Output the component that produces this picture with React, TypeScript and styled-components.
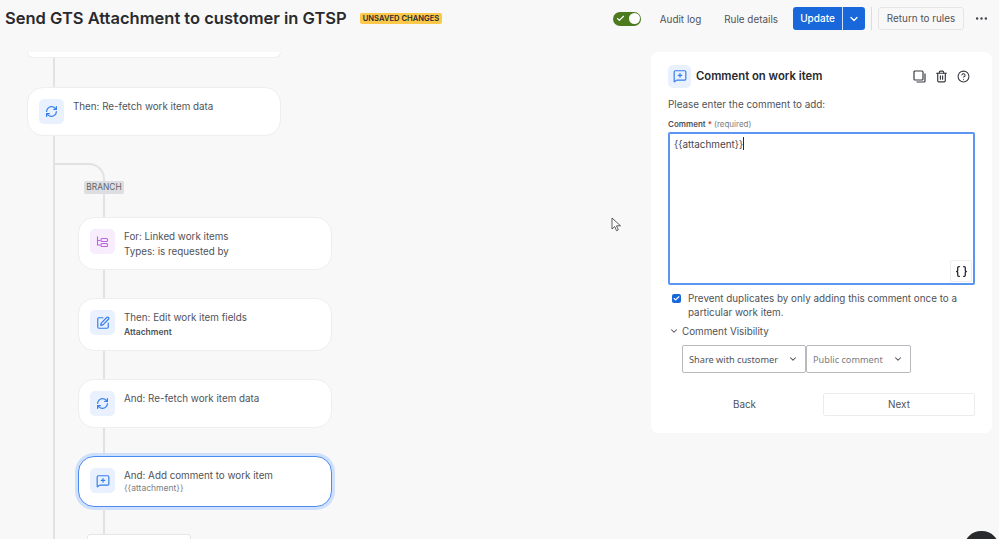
import React from 'react'
import styled, { createGlobalStyle } from 'styled-components'
import {
  Check,
  ChevronDown,
  CircleHelp,
  Ellipsis,
  MessageSquarePlus,
  RefreshCw,
  SquarePen,
  Trash2,
  Braces
} from 'lucide-react'

const GlobalStyle = createGlobalStyle`
  html, body {
    margin: 0;
    padding: 0;
    background: #f8f8f8;
    overflow: hidden;
  }
  * { box-sizing: border-box; }
`

const Page = styled.div`
  position: relative;
  width: 999px;
  height: 539px;
  overflow: hidden;
  background: #f8f8f8;
  color: #292a2e;
  font-family: Inter, 'Liberation Sans', sans-serif;
`

// top bar
const TopBar = styled.header`
  display: flex;
  align-items: center;
  height: 37px;
  padding: 0 0 0 5px;
`

const Title = styled.h1`
  margin: 0;
  font-size: 16.5px;
  line-height: 37px;
  font-weight: 600;
  white-space: nowrap;
`

const Lozenge = styled.span`
  margin-left: 13px;
  padding: 0 3px;
  height: 11px;
  line-height: 11px;
  border-radius: 2px;
  background: #fbc84a;
  font-size: 7.6px;
  font-weight: 600;
  white-space: nowrap;
`

const TopActions = styled.div`
  display: flex;
  align-items: center;
  margin-left: auto;
  height: 37px;
`

const Toggle = styled.div`
  position: relative;
  display: flex;
  align-items: center;
  width: 28px;
  height: 14px;
  margin-right: 19px;
  padding-left: 3px;
  border-radius: 7px;
  background: #4c7a1f;
  color: #fff;
  &::after {
    content: '';
    position: absolute;
    right: 1px;
    top: 1.5px;
    width: 11px;
    height: 11px;
    border-radius: 50%;
    background: #fff;
  }
`

const TextAction = styled.span`
  font-size: 9.9px;
  color: #505258;
  margin-right: 15px;
  white-space: nowrap;
  & + & {
    margin-left: 8px;
  }
`

const SplitButton = styled.div`
  display: flex;
  height: 23px;
  border-radius: 3px;
  overflow: hidden;
  background: #1868db;
  color: #fff;
`

const UpdateLabel = styled.span`
  width: 50px;
  line-height: 23px;
  text-align: center;
  font-size: 10px;
  font-weight: 500;
  border-right: 1px solid #cfe1fd;
`

const SplitChevron = styled.span`
  display: flex;
  align-items: center;
  justify-content: center;
  width: 22px;
`

const Divider = styled.span`
  width: 1px;
  height: 23px;
  margin: 0 6px;
  background: #dcdcdc;
`

const ReturnButton = styled.span`
  width: 86px;
  height: 23px;
  line-height: 21px;
  text-align: center;
  font-size: 9.9px;
  color: #505258;
  border: 1px solid #e6e6e6;
  border-radius: 3px;
  white-space: nowrap;
`

const MoreButton = styled.span`
  display: flex;
  justify-content: center;
  width: 35px;
  color: #44464c;
`

// body
const Body = styled.div`
  display: flex;
  align-items: flex-start;
  padding-top: 15px;
`

const Flow = styled.div`
  width: 651px;
  padding-left: 27px;
`

const CutOffCard = styled.div`
  width: 254px;
  height: 6px;
  background: #fff;
  border: 1px solid #eeeeee;
  border-top: 0;
  border-radius: 0 0 16px 16px;
`

const Connector = styled.div<{ $h: number; $x: number }>`
  width: 2px;
  height: ${(p) => p.$h}px;
  margin-left: ${(p) => p.$x}px;
  background: #e2e2e2;
`

const Card = styled.div<{ $h: number; $selected?: boolean }>`
  display: flex;
  gap: 9px;
  width: 254px;
  height: ${(p) => p.$h}px;
  padding: 11px;
  background: #fff;
  border-radius: 16px;
  border: ${(p) => (p.$selected ? '1.5px solid #4c8cf0' : '1px solid #eeeeee')};
  box-shadow: ${(p) => (p.$selected ? '0 0 0 3px #cfe0fc' : 'none')};
`

const IconTile = styled.span<{ $purple?: boolean }>`
  display: flex;
  flex: none;
  align-items: center;
  justify-content: center;
  width: 25px;
  height: 25px;
  border-radius: 5px;
  background: ${(p) => (p.$purple ? '#f7edfd' : '#e9f1ff')};
  color: ${(p) => (p.$purple ? '#bf63e0' : '#357de8')};
`

const CardText = styled.div`
  font-size: 9.8px;
  line-height: 15px;
  color: #505258;
  white-space: nowrap;
`

const CardSub = styled.div<{ $bold?: boolean }>`
  font-size: 8.5px;
  line-height: 11px;
  font-weight: ${(p) => (p.$bold ? 600 : 400)};
  margin-top: ${(p) => (p.$bold ? '2px' : '0')};
  color: ${(p) => (p.$bold ? '#505258' : '#7b7d83')};
`

const Trunk = styled.div`
  width: 330px;
  margin-left: 26px;
  padding: 27px 0 0 0;
  border-left: 2px solid #e2e2e2;
  height: 410px;
`

const BranchCurve = styled.div`
  width: 50px;
  height: 18px;
  border-top: 2px solid #e2e2e2;
  border-right: 2px solid #e2e2e2;
  border-top-right-radius: 16px;
`

const BranchBadge = styled.span`
  display: block;
  width: 40px;
  height: 13px;
  margin-left: 29px;
  line-height: 13px;
  text-align: center;
  font-size: 8.4px;
  color: #62646a;
  background: #dddee1;
  border-radius: 2px;
`

const BranchCards = styled.div`
  padding-left: 23px;
`

const AddStep = styled.div`
  width: 104px;
  height: 20px;
  margin-left: 9px;
  background: #fff;
  border: 1px solid #e6e6e6;
  border-radius: 3px;
`

// right panel
const Panel = styled.aside`
  width: 341px;
  height: 381px;
  padding: 13px 17px;
  background: #fff;
  border-radius: 8px;
`

const PanelHead = styled.div`
  display: flex;
  align-items: center;
  height: 22px;
`

const PanelTile = styled(IconTile)`
  width: 23px;
  height: 23px;
`

const PanelTitle = styled.h2`
  margin: 0 0 0 5px;
  font-size: 11.3px;
  font-weight: 600;
  white-space: nowrap;
`

const PanelTools = styled.div`
  display: flex;
  gap: 9px;
  margin-left: auto;
  margin-right: 5px;
  color: #3a3c42;
`

const Prompt = styled.p`
  margin: 9px 0 0;
  font-size: 9.9px;
  line-height: 16px;
  color: #505258;
`

const FieldLabel = styled.div`
  margin-top: 6px;
  font-size: 8px;
  line-height: 12px;
  font-weight: 600;
  color: #505258;
  & > em {
    font-style: normal;
    color: #c9372c;
  }
  & > span {
    font-weight: 400;
    color: #7b7d83;
  }
`

const TextBox = styled.div`
  position: relative;
  width: 307px;
  height: 153px;
  margin-top: 2px;
  padding: 2px 4px;
  border: 2px solid #5a96f2;
  border-radius: 2px;
  font-size: 9.9px;
  line-height: 16px;
  color: #44464c;
`

const Caret = styled.span`
  display: inline-block;
  width: 1px;
  height: 13px;
  vertical-align: -2px;
  background: #292a2e;
`

const VarButton = styled.span`
  position: absolute;
  right: 1px;
  bottom: 1px;
  display: flex;
  align-items: center;
  justify-content: center;
  width: 22px;
  height: 22px;
  border: 1px solid #eeeeee;
  border-radius: 2px;
  background: #fff;
  color: #292a2e;
`

const CheckRow = styled.div`
  display: flex;
  gap: 7px;
  width: 300px;
  margin-top: 6px;
  padding-left: 4px;
`

const CheckBox = styled.span`
  display: flex;
  flex: none;
  align-items: center;
  justify-content: center;
  width: 9px;
  height: 9px;
  margin-top: 3px;
  border-radius: 2px;
  background: #1868db;
  color: #fff;
`

const CheckText = styled.span`
  font-size: 9.85px;
  line-height: 14px;
  color: #505258;
`

const Disclosure = styled.div`
  display: flex;
  align-items: center;
  gap: 3px;
  margin-top: 5px;
  font-size: 9.85px;
  line-height: 14px;
  color: #505258;
  & > svg {
    margin-left: 1px;
  }
`

const SelectRow = styled.div`
  display: flex;
  margin: 7px 0 0 14px;
`

const SelectBox = styled.div<{ $w: number; $muted?: boolean }>`
  display: flex;
  align-items: center;
  justify-content: space-between;
  width: ${(p) => p.$w}px;
  height: 28px;
  padding: 0 7px 0 6px;
  border: 1px solid #b9b9bd;
  border-radius: 2px;
  font-family: 'Noto Sans', 'Open Sans', sans-serif;
  font-size: 9.2px;
  color: ${(p) => (p.$muted ? '#7b7d83' : '#505258')};
  white-space: nowrap;
  & > svg {
    color: #44464c;
  }
`

const PanelFooter = styled.div`
  display: flex;
  align-items: center;
  margin-top: 20px;
`

const BackButton = styled.span`
  width: 153px;
  line-height: 21px;
  text-align: center;
  font-size: 9.9px;
  color: #505258;
`

const NextButton = styled.span`
  margin-left: 2px;
  width: 152px;
  height: 23px;
  line-height: 21px;
  text-align: center;
  font-size: 9.9px;
  color: #505258;
  border: 1px solid #ececec;
  border-radius: 2px;
`

const MouseCursor = styled.svg`
  position: absolute;
  left: 611px;
  top: 217px;
`

const HelpBlob = styled.div`
  position: absolute;
  left: 964px;
  top: 531px;
  width: 35px;
  height: 40px;
  border-radius: 17px;
  background: #292a2e;
`

const LinkedIcon = () => (
  <svg width="13" height="13" viewBox="0 0 13 13" fill="none" stroke="currentColor" strokeWidth="1.1">
    <path d="M1.5 1.5v8.5h3M1.5 5.5h3" />
    <rect x="5" y="3.5" width="6.5" height="3" rx="1" />
    <rect x="5" y="8.5" width="6.5" height="3" rx="1" />
  </svg>
)

const DuplicateIcon = () => (
  <svg width="13" height="13" viewBox="0 0 13 13" fill="none" stroke="currentColor" strokeWidth="1.2">
    <rect x="1" y="1" width="9" height="9" rx="1" />
    <path d="M12 3.5v7.5a1 1 0 0 1-1 1H3.5" />
  </svg>
)

const App: React.FC = () => (
  <Page>
    <GlobalStyle />
    <TopBar>
      <Title>Send GTS Attachment to customer in GTSP</Title>
      <Lozenge>UNSAVED CHANGES</Lozenge>
      <TopActions>
        <Toggle>
          <Check size={9} strokeWidth={3} />
        </Toggle>
        <TextAction>Audit log</TextAction>
        <TextAction>Rule details</TextAction>
        <SplitButton>
          <UpdateLabel>Update</UpdateLabel>
          <SplitChevron>
            <ChevronDown size={12} strokeWidth={2.5} />
          </SplitChevron>
        </SplitButton>
        <Divider />
        <ReturnButton>Return to rules</ReturnButton>
        <MoreButton>
          <Ellipsis size={15} />
        </MoreButton>
      </TopActions>
    </TopBar>

    <Body>
      <Flow>
        <CutOffCard />
        <Connector $h={29} $x={26} />
        <Card $h={49}>
          <IconTile>
            <RefreshCw size={13} strokeWidth={2.2} />
          </IconTile>
          <CardText>Then: Re-fetch work item data</CardText>
        </Card>
        <Trunk>
          <BranchCurve />
          <BranchBadge>BRANCH</BranchBadge>
          <BranchCards>
            <Connector $h={23} $x={25} />
            <Card $h={53}>
              <IconTile $purple>
                <LinkedIcon />
              </IconTile>
              <CardText>
                For: Linked work items
                <br />
                Types: is requested by
              </CardText>
            </Card>
            <Connector $h={28} $x={25} />
            <Card $h={53}>
              <IconTile>
                <SquarePen size={14} />
              </IconTile>
              <CardText>
                Then: Edit work item fields
                <CardSub $bold>Attachment</CardSub>
              </CardText>
            </Card>
            <Connector $h={28} $x={25} />
            <Card $h={49}>
              <IconTile>
                <RefreshCw size={13} strokeWidth={2.2} />
              </IconTile>
              <CardText>And: Re-fetch work item data</CardText>
            </Card>
            <Connector $h={28} $x={25} />
            <Card $h={51} $selected>
              <IconTile>
                <MessageSquarePlus size={14} />
              </IconTile>
              <CardText>
                And: Add comment to work item
                <CardSub>{'{{attachment}}'}</CardSub>
              </CardText>
            </Card>
            <Connector $h={27} $x={25} />
            <AddStep />
          </BranchCards>
        </Trunk>
      </Flow>

      <Panel>
        <PanelHead>
          <PanelTile>
            <MessageSquarePlus size={14} />
          </PanelTile>
          <PanelTitle>Comment on work item</PanelTitle>
          <PanelTools>
            <DuplicateIcon />
            <Trash2 size={13} strokeWidth={2.2} />
            <CircleHelp size={13} />
          </PanelTools>
        </PanelHead>
        <Prompt>Please enter the comment to add:</Prompt>
        <FieldLabel>
          Comment <em>*</em> <span>(required)</span>
        </FieldLabel>
        <TextBox>
          {'{{attachment}}'}
          <Caret />
          <VarButton>
            <Braces size={13} strokeWidth={2.4} />
          </VarButton>
        </TextBox>
        <CheckRow>
          <CheckBox>
            <Check size={7} strokeWidth={4} />
          </CheckBox>
          <CheckText>
            Prevent duplicates by only adding this comment once to a particular work item.
          </CheckText>
        </CheckRow>
        <Disclosure>
          <ChevronDown size={10} strokeWidth={2.5} />
          Comment Visibility
        </Disclosure>
        <SelectRow>
          <SelectBox $w={124}>
            Share with customer
            <ChevronDown size={10} strokeWidth={2.5} />
          </SelectBox>
          <SelectBox $w={105} $muted>
            Public comment
            <ChevronDown size={10} strokeWidth={2.5} />
          </SelectBox>
        </SelectRow>
        <PanelFooter>
          <BackButton>Back</BackButton>
          <NextButton>Next</NextButton>
        </PanelFooter>
      </Panel>
    </Body>

    <MouseCursor width="11" height="15" viewBox="0 0 11 15">
      <path d="M1 1v11l2.7-2.5 1.8 4.2 1.8-.8-1.8-4.1H9.5z" fill="#fff" stroke="#333" strokeWidth="0.8" />
    </MouseCursor>
    <HelpBlob />
  </Page>
)

export default App
